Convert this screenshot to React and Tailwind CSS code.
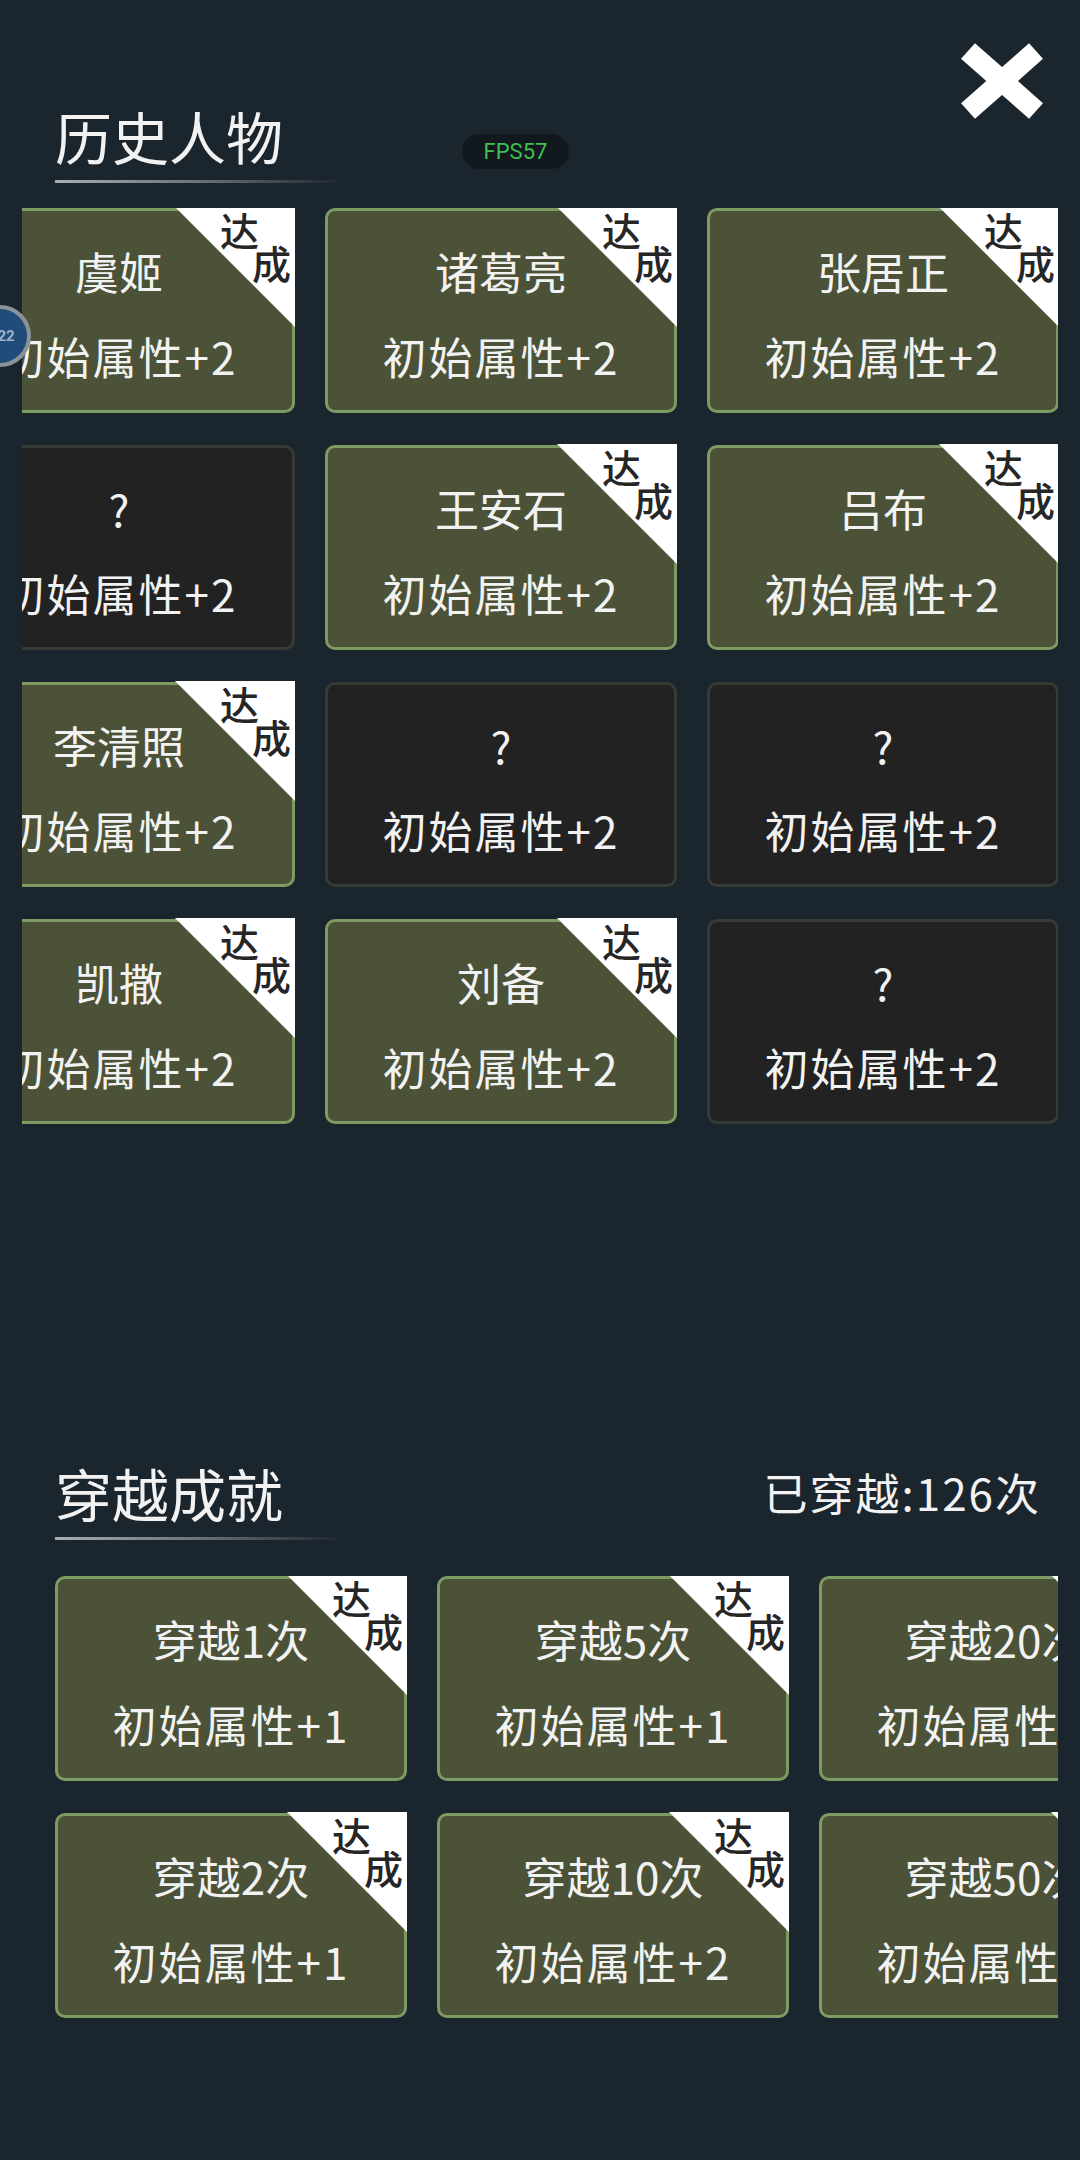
import React from 'react'

const figures = [
    { name: '虞姬', done: true },
    { name: '诸葛亮', done: true },
    { name: '张居正', done: true },
    { name: '?', done: false },
    { name: '王安石', done: true },
    { name: '吕布', done: true },
    { name: '李清照', done: true },
    { name: '?', done: false },
    { name: '?', done: false },
    { name: '凯撒', done: true },
    { name: '刘备', done: true },
    { name: '?', done: false },
];

const travels = [
    { name: '穿越1次', bonus: 1 },
    { name: '穿越5次', bonus: 1 },
    { name: '穿越20次', bonus: 2 },
    { name: '穿越2次', bonus: 1 },
    { name: '穿越10次', bonus: 2 },
    { name: '穿越50次', bonus: 3 },
];

const font = { fontFamily: '"Noto Sans CJK SC", "Noto Sans", sans-serif' };

// 达成 corner ribbon
const Ribbon = () => (
    <div className="absolute right-[-3px] top-[-4px] h-[120px] w-[120px]">
        <div className="absolute inset-0 bg-white [clip-path:polygon(0_0,100%_0,100%_100%)]"></div>
        <span className="absolute right-[36px] top-[2px] text-[39px] leading-[40px] font-medium text-[#262626]">达</span>
        <span className="absolute right-[4px] top-[35px] text-[39px] leading-[40px] font-medium text-[#262626]">成</span>
    </div>
);

const Card = ({ name, bonus, done }) => {
    return (
        <div
            className={
                done
                    ? 'relative flex h-[205px] w-[352px] flex-col items-center rounded-[10px] border-[3px] border-[#7d9b63] bg-[#4b5237] text-[#f2f2f2]'
                    : 'relative flex h-[205px] w-[352px] flex-col items-center rounded-[10px] border-[3px] border-[#373b36] bg-[#222222] text-[#f2f2f2]'
            }
        >
            <p className="pt-[35px] text-[44px] leading-[50px] whitespace-nowrap">{name}</p>
            <p className="mt-[35px] text-[44px] leading-[50px] tracking-[2px] whitespace-nowrap">初始属性+{bonus}</p>
            {done && <Ribbon />}
        </div>
    );
};

const Heading = ({ title, right }) => {
    return (
        <div className="px-[55px]">
            <div className="flex items-center justify-between">
                <h2 className="text-[57px] leading-[70px] text-[#f2f2f2]">{title}</h2>
                {right && <p className="mr-[-16px] text-[44px] leading-[70px] tracking-[2px] text-[#f2f2f2]">{right}</p>}
            </div>
            <div className="mt-[10px] h-[3px] w-[290px] bg-gradient-to-r from-[#a9adb2] via-[#6b7177] to-transparent"></div>
        </div>
    );
};

const App = () => {
    return (
        <div className="relative min-h-[2160px] w-[1080px] overflow-hidden bg-[#1b252e]" style={font}>
            {/* history figures */}
            <section className="pt-[100px]">
                <Heading title="历史人物" />
                <div className="ml-[22px] mt-[25px] w-[1036px] overflow-hidden">
                    <div className="ml-[-79px] grid w-max grid-cols-[repeat(3,352px)] gap-x-[30px] gap-y-[32px]">
                        {figures.map((f, i) => (
                            <Card key={i} name={f.name} bonus={2} done={f.done} />
                        ))}
                    </div>
                </div>
            </section>

            {/* travel achievements */}
            <section className="mt-[333px]">
                <Heading title="穿越成就" right="已穿越:126次" />
                <div className="ml-[22px] mt-[36px] w-[1036px] overflow-hidden">
                    <div className="ml-[33px] grid w-max grid-cols-[repeat(3,352px)] gap-x-[30px] gap-y-[32px]">
                        {travels.map((t, i) => (
                            <Card key={i} name={t.name} bonus={t.bonus} done={true} />
                        ))}
                    </div>
                </div>
            </section>

            {/* close button */}
            <button className="absolute right-[36px] top-[43px] h-[76px] w-[84px]">
                <svg viewBox="0 0 84 76" width="84" height="76">
                    <line x1="8" y1="8" x2="76" y2="68" stroke="#ffffff" strokeWidth="21" />
                    <line x1="76" y1="8" x2="8" y2="68" stroke="#ffffff" strokeWidth="21" />
                </svg>
            </button>

            {/* fps overlay */}
            <div className="absolute left-[462px] top-[134px] flex h-[35px] w-[107px] items-center justify-center rounded-full bg-[#12191e]">
                <span className="text-[22px] leading-none text-[#3fbf50]" style={{ fontFamily: 'Roboto, sans-serif' }}>FPS57</span>
            </div>

            {/* floating badge */}
            <div className="absolute left-[-31px] top-[305px] flex h-[62px] w-[62px] items-center justify-center rounded-full border-[4px] border-[#8d9298] bg-[#1f4c7a]">
                <span className="pl-[12px] text-[15px] font-bold leading-none text-[#9fb3c8]" style={{ fontFamily: 'Roboto, sans-serif' }}>22</span>
            </div>
        </div>
    );
};

export default App
